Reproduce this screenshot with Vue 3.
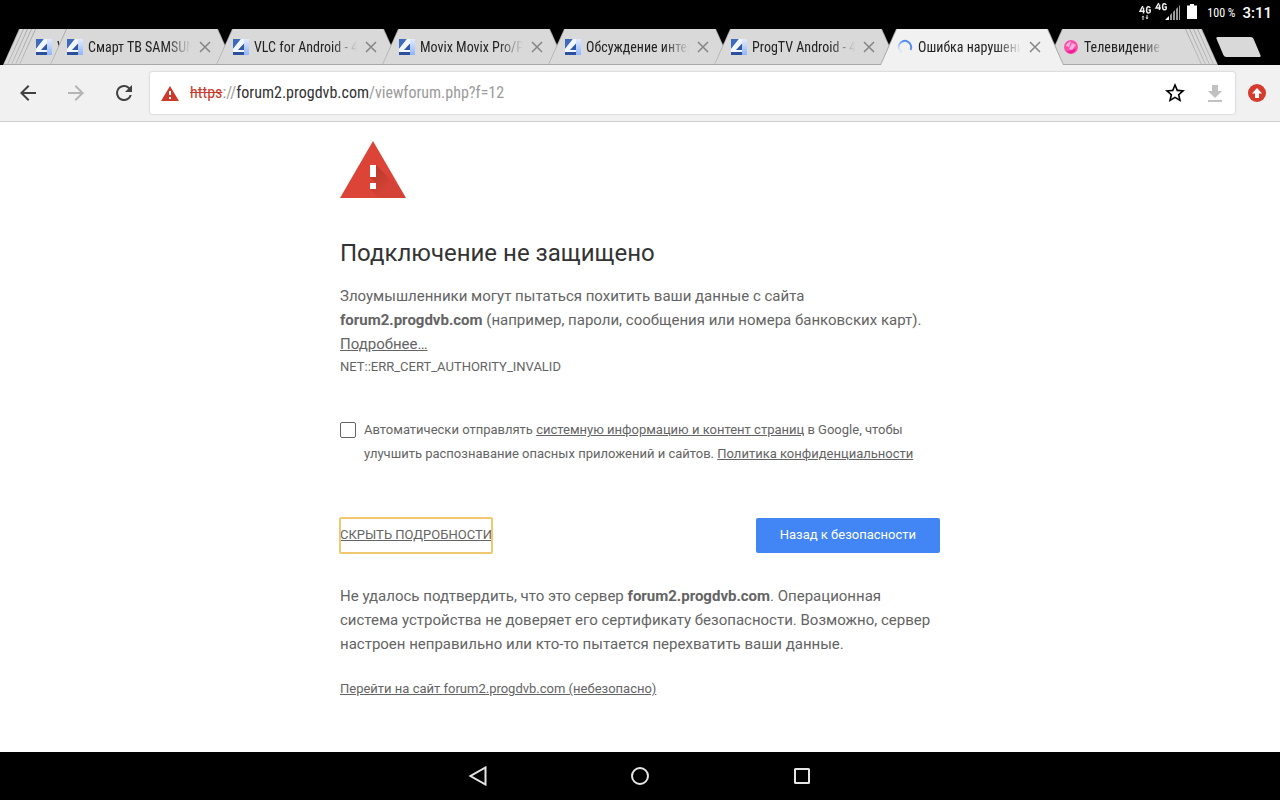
<template>
  <div class="device">
    <header class="status-bar">
      <svg class="status-net" width="42" height="20" viewBox="0 0 42 20" aria-hidden="true">
        <g fill="none" stroke="#f0f0f0" stroke-width="1.5">
          <path d="M3.8 6 1 11.2h4.8M4.5 7.5v6M11.2 8Q10.500 6.500 9 6.800 7.600 7 7.600 10t1.600 3q1.500 0 2-1v-2H9.500" />
          <path d="M19.800 3 17 8h4.800M20.500 4.500V10M27.200 5Q26.500 3.500 25 3.800 23.600 4 23.600 6.800t1.600 3q1.500 0 2-1V7H25.500" />
        </g>
        <path d="M2.500 17.500h3L4 15.500zM3.500 17h1v3h-1zM6.500 17.500h3L8 19.500zM7.500 15h1v3h-1z" fill="#f0f0f0" />
        <path d="m26 20 4-4v4z" fill="#fff" />
        <path d="M31 15l2-2v7h-2zM34 12l2-2v10h-2zM37 9l2-2v13h-2zM40 6l1-1v15h-1z" fill="#999" />
      </svg>
      <svg class="status-battery" width="10" height="15" viewBox="0 0 10 15" aria-hidden="true">
        <path d="M3 0h4v1.500h3V15H0V1.500h3z" fill="#fff" />
      </svg>
      <span class="status-level">100 %</span>
      <span class="status-time">3:11</span>
    </header>

    <nav class="tab-strip" aria-label="Вкладки">
      <div
        v-for="(tab, i) in tabs"
        :key="i"
        class="tab"
        :class="[tab.kind, { active: i === activeTab }]"
        :style="{ zIndex: 20 - Math.abs(i - activeTab) }"
      >
        <template v-if="tab.title">
          <svg v-if="tab.icon === 'spinner'" class="tab-icon" viewBox="0 0 16 16" aria-hidden="true">
            <defs>
              <linearGradient id="spin" x1="1" y1="0" x2="0" y2="1">
                <stop offset="0.300" stop-color="#4f8df5" />
                <stop offset="0.900" stop-color="#4f8df5" stop-opacity="0.050" />
              </linearGradient>
            </defs>
            <path d="M13.500 11A6.300 6.300 0 1 0 5 13.800" fill="none" stroke="url(#spin)" stroke-width="2" />
          </svg>
          <svg v-else-if="tab.icon === 'ball'" class="tab-icon" viewBox="0 0 16 16" aria-hidden="true">
            <circle cx="8" cy="8" r="7" fill="#fb4fae" />
            <path d="M3 7Q4 3 8 2.500L6 8zM9 4l4 2-4 5-3-1z" fill="#fdb1da" />
            <path d="M3 12q5 1 10-3-1 5-6 5.500z" fill="#ee1b94" />
          </svg>
          <svg v-else class="tab-icon" viewBox="0 0 16 16" aria-hidden="true">
            <defs>
              <linearGradient id="fav" x1="0" y1="0" x2="0" y2="1">
                <stop offset="0" stop-color="#e3ecfe" />
                <stop offset="1" stop-color="#8fb4fc" />
              </linearGradient>
            </defs>
            <rect width="16" height="16" fill="url(#fav)" />
            <path d="M0 0h8L0 10z" fill="#3f6cba" />
            <path d="M8 0h3v5L5 11h6v2H0v-3z" fill="#f2f6ff" />
            <path d="M11 4.500V11H5z" fill="#3158a4" />
            <path d="M0 13h11v3H0z" fill="#2c519c" />
          </svg>
          <a class="tab-title" href="#">{{ tab.title }}</a>
          <button v-if="tab.closable" class="tab-close" type="button" aria-label="Закрыть">
            <svg width="12" height="12" viewBox="0 0 12 12"><path d="m1 1 10 10M11 1 1 11" stroke="#858585" stroke-width="1.500" /></svg>
          </button>
        </template>
      </div>
      <button class="new-tab" type="button" aria-label="Новая вкладка"></button>
    </nav>

    <div class="toolbar">
      <button class="tool" type="button" aria-label="Назад">
        <svg width="24" height="24" viewBox="0 0 24 24"><path d="M20 11H7.830l5.590-5.590L12 4l-8 8 8 8 1.410-1.410L7.830 13H20z" fill="#414141" /></svg>
      </button>
      <button class="tool" type="button" aria-label="Вперёд" disabled>
        <svg width="24" height="24" viewBox="0 0 24 24"><path d="m12 4-1.410 1.410L16.170 11H4v2h12.170l-5.580 5.590L12 20l8-8z" fill="#b5b5b5" /></svg>
      </button>
      <button class="tool" type="button" aria-label="Обновить">
        <svg width="24" height="24" viewBox="0 0 24 24"><path d="M17.650 6.350A7.960 7.960 0 0 0 12 4a8 8 0 1 0 7.730 10h-2.080A6 6 0 1 1 12 6c1.660 0 3.140.690 4.220 1.780L13 11h7V4z" fill="#414141" /></svg>
      </button>
      <form class="omnibox" @submit.prevent>
        <svg class="warn" width="18" height="15" viewBox="0 0 18 15" aria-hidden="true">
          <path d="M9 0l9 15H0z" fill="#cb3a2b" />
          <path d="M8 5h2v4H8zM8 11h2v2H8z" fill="#fff" />
        </svg>
        <div class="address">
          <input v-model="url" type="text" aria-label="Адрес" spellcheck="false" />
          <span class="address-view" aria-hidden="true"><s>{{ parts.scheme }}</s>://<b>{{ parts.host }}</b>{{ parts.path }}</span>
        </div>
        <button class="omni-button" type="button" aria-label="В закладки">
          <svg width="24" height="24" viewBox="0 0 24 24"><path d="M22 9.240l-7.190-.620L12 2 9.190 8.630 2 9.240l5.460 4.730L5.820 21 12 17.270 18.180 21l-1.630-7.030zM12 15.400l-3.760 2.270 1-4.280-3.320-2.880 4.380-.380L12 6.100l1.710 4.040 4.380.380-3.320 2.880 1 4.280z" fill="#000" /></svg>
        </button>
        <button class="omni-button" type="button" aria-label="Скачать" disabled>
          <svg width="24" height="24" viewBox="0 0 24 24"><path d="M19 10h-4V4H9v6H5l7 7zM5 19v2h14v-2z" fill="#c1c1c1" /></svg>
        </button>
      </form>
      <button class="update" type="button" aria-label="Обновление">
        <svg width="18" height="18" viewBox="0 0 18 18">
          <circle cx="9" cy="9" r="9" fill="#d63b2d" />
          <path d="M9 4 14 9.500H11V14H7V9.500H4z" fill="#fff" />
        </svg>
      </button>
    </div>

    <main class="page">
      <div class="content">
        <svg class="alert" width="66" height="57" viewBox="0 0 66 57" aria-hidden="true">
          <defs>
            <clipPath id="tri"><path d="M33 0l33 57H0z" /></clipPath>
            <linearGradient id="shade" gradientUnits="userSpaceOnUse" x1="34" y1="34" x2="46" y2="46">
              <stop offset="0" stop-color="#000" stop-opacity="0.140" />
              <stop offset="1" stop-color="#000" stop-opacity="0.030" />
            </linearGradient>
          </defs>
          <path d="M33 0l33 57H0z" fill="#db4437" />
          <path d="M36 24l33 33H39l-9-9h6v-6l-6-6h6z" fill="url(#shade)" clip-path="url(#tri)" />
          <path d="M30 24h6v12h-6zM30 42h6v6h-6z" fill="#fff" />
        </svg>

        <h1>Подключение не защищено</h1>
        <p class="text">
          Злоумышленники могут пытаться похитить ваши данные с сайта
          <strong>forum2.progdvb.com</strong> (например, пароли, сообщения или номера банковских карт).
          <a href="#">Подробнее…</a>
        </p>
        <p class="error-code">NET::ERR_CERT_AUTHORITY_INVALID</p>

        <div class="opt-in">
          <input id="opt-in" v-model="report" type="checkbox" />
          <label for="opt-in">
            Автоматически отправлять <a href="#">системную информацию и контент страниц</a> в Google, чтобы
            улучшить распознавание опасных приложений и сайтов. <a href="#">Политика конфиденциальности</a>
          </label>
        </div>

        <div class="actions">
          <button class="details-button" type="button" @click="showDetails = !showDetails">
            {{ showDetails ? 'Скрыть подробности' : 'Подробности' }}
          </button>
          <button class="primary-button" type="button">Назад к безопасности</button>
        </div>

        <section v-if="showDetails" class="details">
          <p class="text">
            Не удалось подтвердить, что это сервер <strong>forum2.progdvb.com</strong>. Операционная
            система устройства не доверяет его сертификату безопасности. Возможно, сервер
            настроен неправильно или кто-то пытается перехватить ваши данные.
          </p>
          <a class="proceed" href="#">Перейти на сайт forum2.progdvb.com (небезопасно)</a>
        </section>
      </div>
    </main>

    <footer class="nav-bar">
      <button type="button" aria-label="Назад">
        <svg width="20" height="20" viewBox="0 0 20 20"><path d="M17.500 1.500v17L2.500 10z" /></svg>
      </button>
      <button type="button" aria-label="Домой">
        <svg width="20" height="20" viewBox="0 0 20 20"><circle cx="10" cy="10" r="8" /></svg>
      </button>
      <button type="button" aria-label="Обзор">
        <svg width="20" height="20" viewBox="0 0 20 20"><rect x="3" y="3" width="14" height="14" rx="0.500" /></svg>
      </button>
    </footer>
  </div>
</template>

<script setup>
import { computed, ref } from 'vue'

const tabs = [
  { kind: 'stack-left' },
  { kind: 'stack-left' },
  { kind: 'stack-left' },
  { kind: 'stack-left' },
  { kind: 'peek', title: 'V' },
  { title: 'Смарт ТВ SAMSUNG', closable: true },
  { title: 'VLC for Android - 4PDA', closable: true },
  { title: 'Movix Movix Pro/Pro', closable: true },
  { title: 'Обсуждение интерфейса', closable: true },
  { title: 'ProgTV Android - 4PDA', closable: true },
  { title: 'Ошибка нарушения', icon: 'spinner', closable: true },
  { kind: 'last', title: 'Телевидение', icon: 'ball' },
  { kind: 'stack-right' },
  { kind: 'stack-right' },
  { kind: 'stack-right' },
  { kind: 'stack-right' }
]
const activeTab = 10

const url = ref('https://forum2.progdvb.com/viewforum.php?f=12')
const parts = computed(() => {
  const m = url.value.match(/^(\w+):\/\/([^/]*)(.*)$/)
  return m ? { scheme: m[1], host: m[2], path: m[3] } : { scheme: '', host: url.value, path: '' }
})

const report = ref(false)
const showDetails = ref(true)
</script>

<style>
body {
  margin: 0;
}
</style>

<style scoped>
.device {
  display: flex;
  flex-direction: column;
  min-height: 100vh;
  background: #fff;
  color: #646464;
  font-family: Roboto, "Noto Sans", sans-serif;
}

button {
  padding: 0;
  border: 0;
  background: none;
  font-family: inherit;
  cursor: pointer;
}

svg {
  display: block;
}

/* Android status bar */
.status-bar {
  display: flex;
  justify-content: flex-end;
  height: 29px;
  padding-right: 8px;
  background: #000;
  color: #fff;
}
.status-battery {
  margin: 4px 10px 0 6px;
}
.status-level {
  margin-right: 7px;
  font: 12px/26px "Roboto Condensed", Roboto, sans-serif;
}
.status-time {
  font-size: 15px;
  font-weight: 500;
  line-height: 26px;
}

/* tabs */
.tab-strip {
  display: flex;
  height: 36px;
  padding-left: 3px;
  overflow: hidden;
  background: #000;
}
.tab {
  position: relative;
  display: flex;
  flex: none;
  align-items: center;
  box-sizing: border-box;
  width: 184px;
  margin-right: -18px;
  padding-left: 17px;
}
.tab::before,
.tab::after {
  content: "";
  position: absolute;
  inset: 0;
  z-index: -1;
  background: #a8a8a8;
  clip-path: polygon(16px 0, calc(100% - 16px) 0, 100% 100%, 0 100%);
}
.tab::after {
  inset: 0 1px 1px;
  background: #d9d9d9;
}
.tab.active::after {
  bottom: 0;
  background: #f1f1f1;
}
.tab.stack-left {
  margin-right: -180px;
}
.tab.peek {
  margin-right: -153px;
}
.tab.last {
  width: 156px;
  margin-right: -36px;
}
.tab.stack-right {
  width: 40px;
  margin-right: -36px;
}
.tab-icon {
  flex: none;
  width: 16px;
  height: 16px;
  margin-right: 5px;
}
.tab-title {
  width: 103px;
  overflow: hidden;
  color: #222;
  font: 14px/20px "Roboto Condensed", Roboto, sans-serif;
  white-space: nowrap;
  text-decoration: none;
  -webkit-mask-image: linear-gradient(to right, #000 76%, transparent);
  mask-image: linear-gradient(to right, #000 76%, transparent);
}
.last .tab-title {
  width: 78px;
}
.tab-close {
  margin-left: 8px;
}
.new-tab {
  align-self: center;
  width: 37px;
  height: 20px;
  margin-left: 38px;
  border-radius: 2px;
  background: #d9d9d9;
  transform: skewX(23deg);
}

/* toolbar */
.toolbar {
  display: flex;
  align-items: center;
  box-sizing: border-box;
  height: 57px;
  padding-left: 4px;
  border-bottom: 1px solid #cdcdcd;
  background: #f1f1f1;
}
.tool {
  display: grid;
  place-items: center;
  width: 48px;
  height: 48px;
}
.omnibox {
  display: flex;
  flex: 1;
  align-items: center;
  height: 42px;
  margin-left: 2px;
  border-radius: 2px;
  background: #fff;
  box-shadow: 0 0 2px rgba(0, 0, 0, 0.3);
}
.warn {
  margin: 0 11px;
}
.address {
  position: relative;
  flex: 1;
  font: 16px/24px "Roboto Condensed", Roboto, sans-serif;
}
.address input {
  display: block;
  box-sizing: border-box;
  width: 100%;
  padding: 0;
  border: 0;
  outline: 0;
  background: none;
  color: transparent;
  font: inherit;
}
.address input:focus {
  color: #333;
}
.address input:focus + .address-view {
  visibility: hidden;
}
.address-view {
  position: absolute;
  inset: 0;
  color: #9b9b9b;
  pointer-events: none;
}
.address-view s {
  color: #cb3a2b;
}
.address-view b {
  color: #333;
  font-weight: 400;
}
.omni-button {
  display: grid;
  place-items: center;
  width: 40px;
  height: 40px;
}
.update {
  margin: 0 14px 0 13px;
}

/* warning page */
.page {
  flex: 1;
}
.content {
  box-sizing: border-box;
  max-width: 600px;
  margin: 0 auto;
  padding: 19px 0 32px;
}
h1 {
  margin: 39px 0 15px;
  color: #333;
  font-size: 24px;
  font-weight: 400;
  line-height: 32px;
}
a {
  color: inherit;
}
.text {
  margin: 0;
  font-size: 15px;
  line-height: 24px;
}
.error-code {
  margin: 0;
  font-size: 13px;
  line-height: 22px;
}
.opt-in {
  display: flex;
  gap: 8px;
  margin-top: 40px;
  font-size: 13px;
  line-height: 24px;
}
.opt-in input {
  flex: none;
  box-sizing: border-box;
  width: 16px;
  height: 16px;
  margin: 4px 0;
  border: 1px solid #646464;
  border-radius: 2px;
  background: #fff;
  appearance: none;
}
.opt-in input:checked {
  background: #4285f4;
}
.actions {
  display: flex;
  align-items: center;
  justify-content: space-between;
  margin-top: 52px;
}
.details-button,
.primary-button {
  height: 35px;
  padding-bottom: 2px;
  font-size: 13px;
}
.details-button {
  border-radius: 1px;
  outline: 2px solid #f1c76f;
  outline-offset: -1px;
  color: #646464;
  text-decoration: underline;
  text-transform: uppercase;
}
.primary-button {
  padding-left: 24px;
  padding-right: 24px;
  border-radius: 2px;
  background: #4285f4;
  color: #fff;
}
.details {
  margin-top: 31px;
}
.proceed {
  display: inline-block;
  margin-top: 21px;
  font-size: 13px;
  line-height: 24px;
}

/* Android navigation */
.nav-bar {
  display: flex;
  justify-content: center;
  gap: 114px;
  background: #000;
}
.nav-bar button {
  display: grid;
  place-items: center;
  width: 48px;
  height: 48px;
}
.nav-bar svg {
  fill: none;
  stroke: #e6e6e6;
  stroke-width: 2;
}
</style>
